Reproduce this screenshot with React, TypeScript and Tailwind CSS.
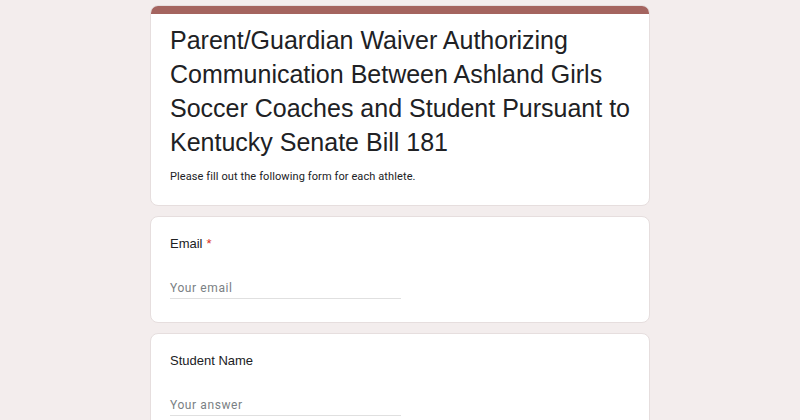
export default function App() {
  return (
    <div className="h-[420px] w-full overflow-hidden bg-[#f3eded] pt-[5px]">
      <div className="mx-auto flex w-[500px] flex-col gap-[10px]">
        {/* Header card */}
        <div className="overflow-hidden rounded-lg border border-[#e6dede] bg-white">
          <div className="h-[8px] bg-[#a4645f]" />
          <div className="px-[19px] pt-[9px] pb-[20px]">
            <h1 className="font-['Liberation_Sans',Arial,sans-serif] text-[25px] leading-[34px] text-[#202124]">
              Parent/Guardian Waiver Authorizing Communication Between Ashland Girls Soccer Coaches and Student Pursuant to Kentucky Senate Bill 181
            </h1>
            <p className="mt-[10px] font-['Roboto',sans-serif] text-[11px] leading-[16px] tracking-[0.1px] text-[#202124]">
              Please fill out the following form for each athlete.
            </p>
          </div>
        </div>

        <Question label="Email" required placeholder="Your email" />
        <Question label="Student Name" placeholder="Your answer" />
      </div>
    </div>
  );
}

function Question({ label, required, placeholder }: { label: string; required?: boolean; placeholder: string }) {
  return (
    <div className="rounded-lg border border-[#e6dede] bg-white px-[19px] pt-[18px] pb-[23px]">
      <div className="font-['Liberation_Sans',Arial,sans-serif] text-[13px] leading-[18px] text-[#202124]">
        {label}
        {required && <span className="ml-[4px] text-[#d93025]">*</span>}
      </div>
      <div className="mt-[26px] w-[231px] border-b border-[#e0e0e0] pb-[1px] font-['Roboto',sans-serif] text-[12px] leading-[18px] tracking-[0.6px] text-[#7a7f84]">
        {placeholder}
      </div>
    </div>
  );
}
